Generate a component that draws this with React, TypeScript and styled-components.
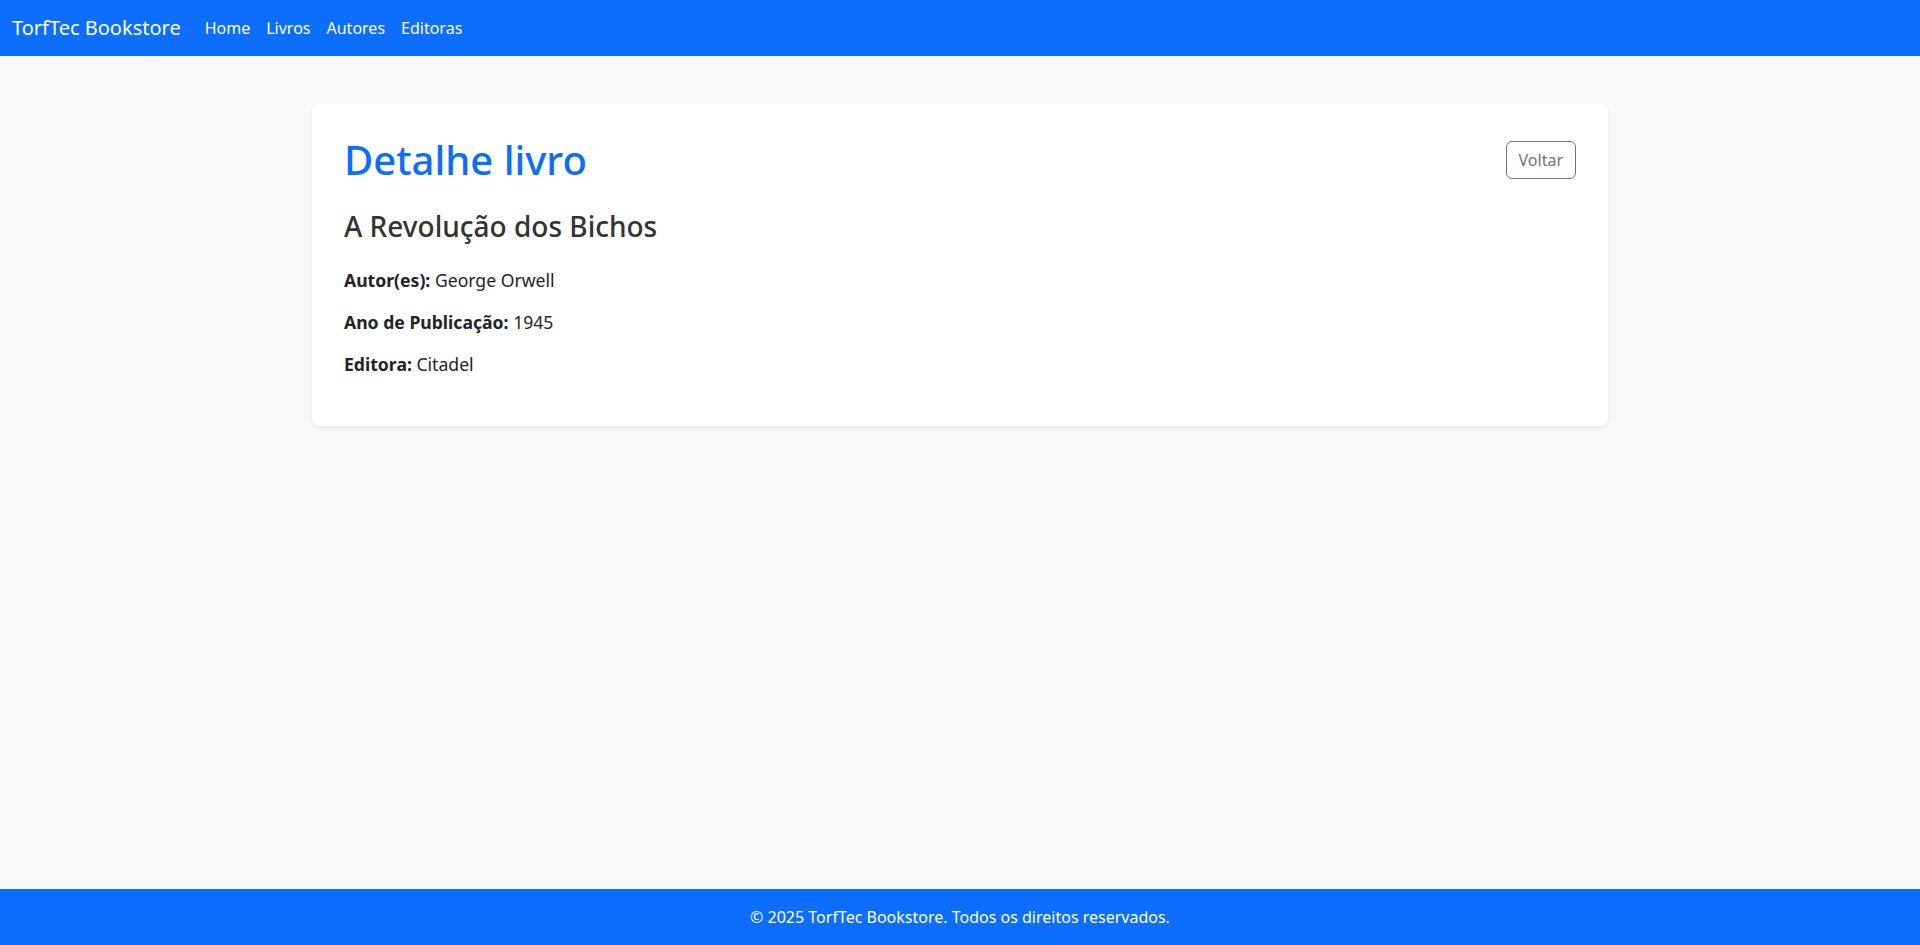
import styled, { createGlobalStyle } from 'styled-components'

// 책 상세 페이지 - 네비게이션 / 카드 / 푸터

const GlobalStyle = createGlobalStyle`
  *, *::before, *::after { box-sizing: border-box; }
  html, body { margin: 0; padding: 0; }
  body {
    font-family: "Segoe UI", "Noto Sans", "Open Sans", sans-serif;
    font-size: 16px;
    line-height: 1.5;
    color: #212529;
    background: #f8f9fa;
  }
`

const Page = styled.div`
  min-height: 100vh;
  display: flex;
  flex-direction: column;
`

/* ───── navbar ───── */

const NavBar = styled.nav`
  height: 56px;
  background: #0d6efd;
  display: flex;
  align-items: center;
  padding: 0 12px;
`

const Brand = styled.a`
  color: #fff;
  font-size: 20px;
  margin-right: 16px;
  text-decoration: none;
  white-space: nowrap;
`

const NavLinks = styled.ul`
  display: flex;
  list-style: none;
  margin: 0;
  padding: 0;
`

const NavLink = styled.a`
  display: block;
  padding: 8px;
  color: #fff;
  text-decoration: none;
`

/* ───── main ───── */

const Main = styled.main`
  flex: 1;
  width: 100%;
  max-width: 1320px;
  margin: 0 auto;
  padding: 48px 12px;
`

const Card = styled.section`
  background: #fff;
  border-radius: 8px;
  box-shadow: 0 .125rem .25rem rgba(0, 0, 0, .075);
  padding: 32px;
`

const CardHead = styled.div`
  display: flex;
  justify-content: space-between;
  align-items: center;
  margin-bottom: 26px;
`

const Title = styled.h1`
  margin: 0;
  font-size: 40px;
  font-weight: 500;
  line-height: 1.2;
  color: #0d6efd;
`

const BackBtn = styled.button`
  font-family: inherit;
  font-size: 16px;
  line-height: 1.5;
  padding: 6px 12px;
  color: #6c757d;
  background: transparent;
  border: 1px solid #6c757d;
  border-radius: 6px;
  cursor: pointer;
`

const BookTitle = styled.h3`
  margin: 0 0 23px;
  font-size: 28px;
  font-weight: 500;
  line-height: 1.2;
  color: #333;
`

const Info = styled.p`
  margin: 0 0 16px;
  font-size: 17.6px;
  line-height: 1.5;
  strong { font-weight: 700; }
`

/* ───── footer ───── */

const Footer = styled.footer`
  height: 56px;
  background: #0d6efd;
  color: #fff;
  display: flex;
  align-items: center;
  justify-content: center;
`

const book = {
  titulo: 'A Revolução dos Bichos',
  autores: 'George Orwell',
  ano: 1945,
  editora: 'Citadel',
}

export default function App() {
  return (
    <Page>
      <GlobalStyle />
      <NavBar>
        <Brand href="#">TorfTec Bookstore</Brand>
        <NavLinks>
          <li><NavLink href="#">Home</NavLink></li>
          <li><NavLink href="#">Livros</NavLink></li>
          <li><NavLink href="#">Autores</NavLink></li>
          <li><NavLink href="#">Editoras</NavLink></li>
        </NavLinks>
      </NavBar>

      <Main>
        <Card>
          <CardHead>
            <Title>Detalhe livro</Title>
            <BackBtn>Voltar</BackBtn>
          </CardHead>
          <BookTitle>{book.titulo}</BookTitle>
          <Info><strong>Autor(es):</strong> {book.autores}</Info>
          <Info><strong>Ano de Publicação:</strong> {book.ano}</Info>
          <Info><strong>Editora:</strong> {book.editora}</Info>
        </Card>
      </Main>

      <Footer>© 2025 TorfTec Bookstore. Todos os direitos reservados.</Footer>
    </Page>
  )
}
